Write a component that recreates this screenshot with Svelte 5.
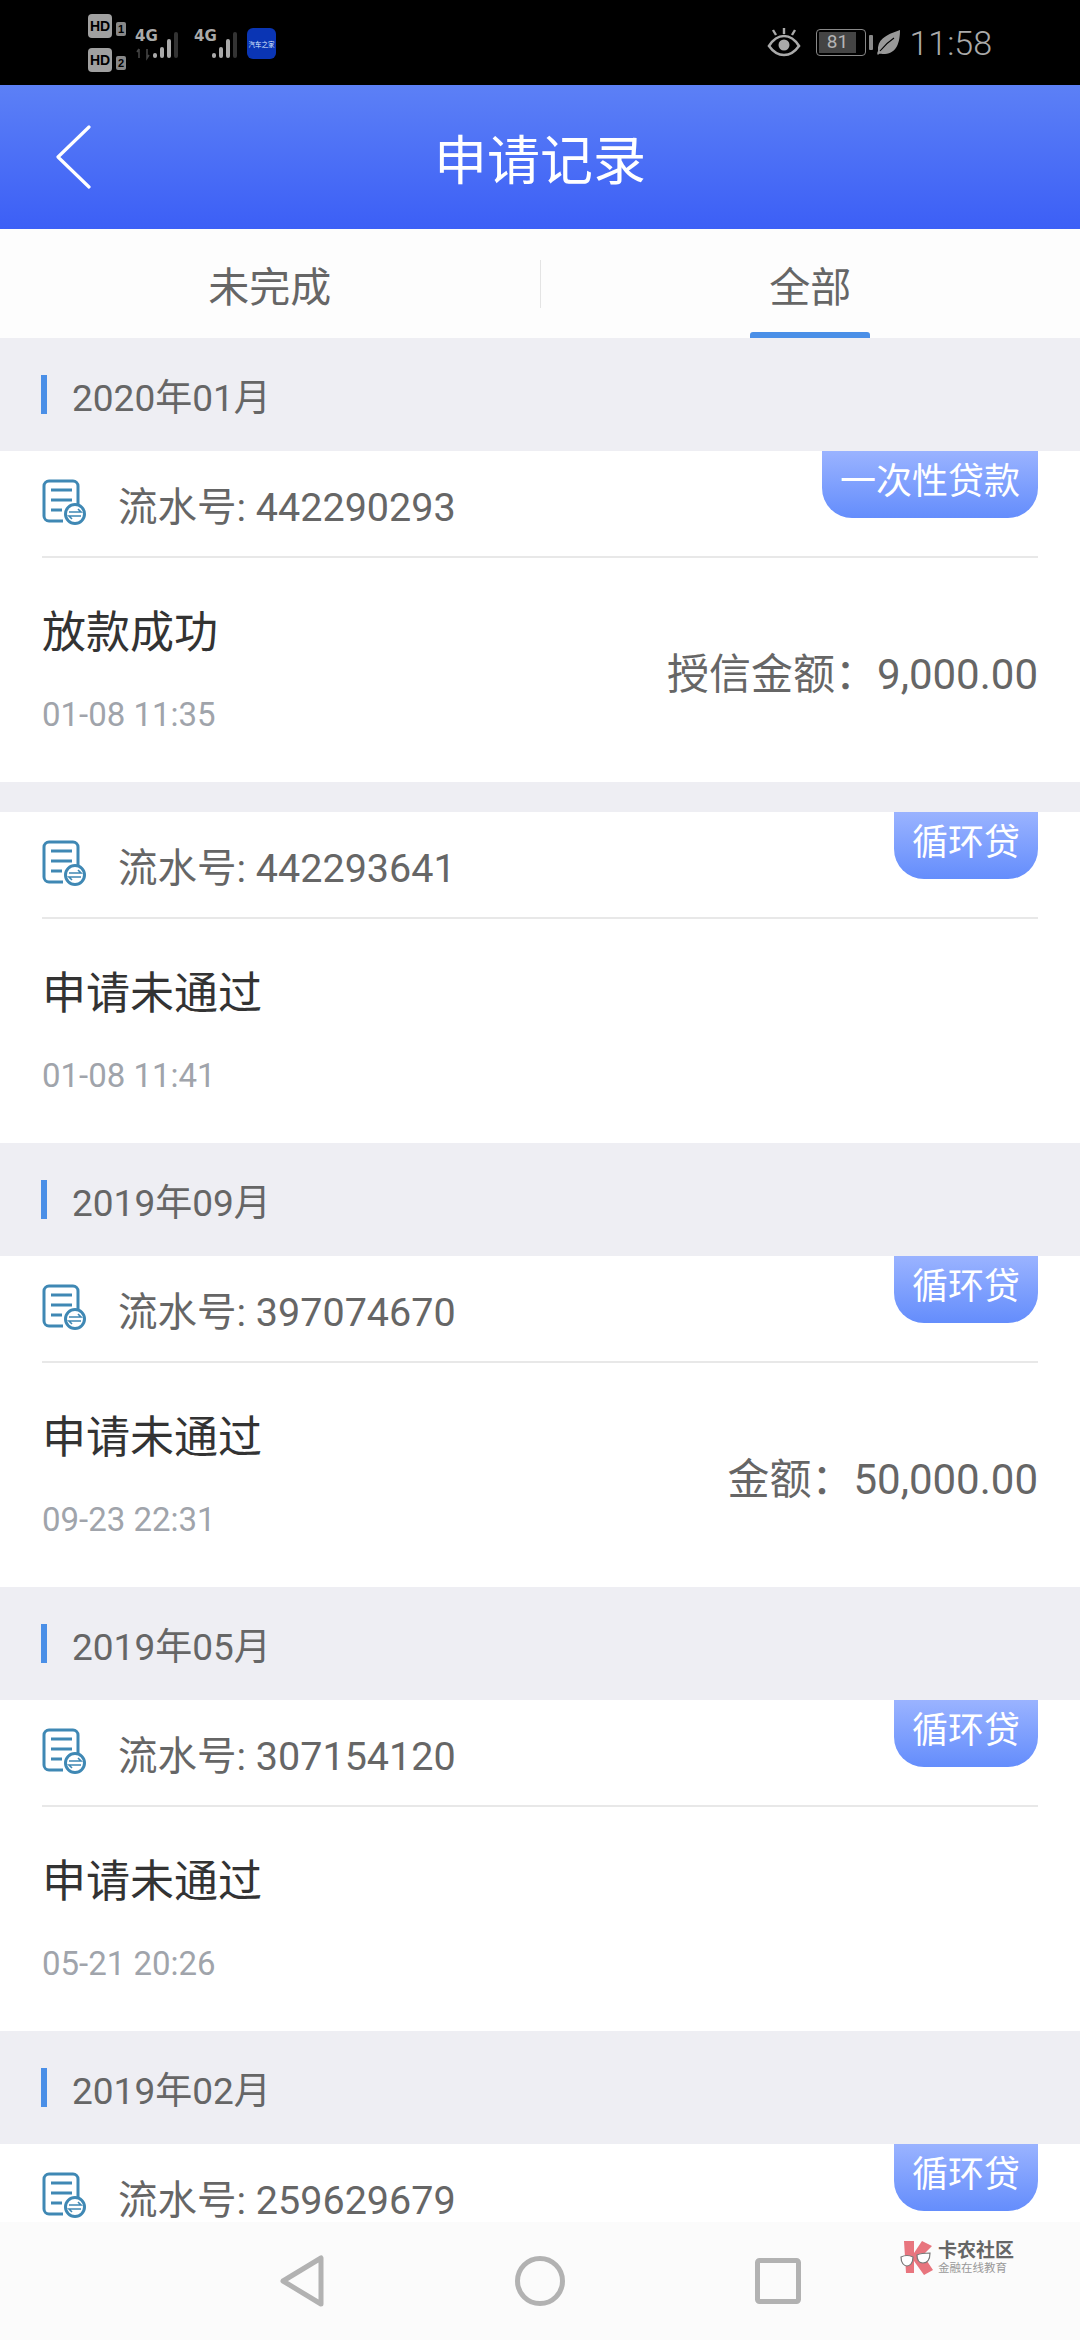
<script>
	const groups = [
		{
			month: "2020年01月",
			items: [
				{ no: "442290293", tag: "一次性贷款", title: "放款成功", time: "01-08 11:35", label: "授信金额", amount: "9,000.00" },
				{ no: "442293641", tag: "循环贷", title: "申请未通过", time: "01-08 11:41" }
			]
		},
		{
			month: "2019年09月",
			items: [{ no: "397074670", tag: "循环贷", title: "申请未通过", time: "09-23 22:31", label: "金额", amount: "50,000.00" }]
		},
		{
			month: "2019年05月",
			items: [{ no: "307154120", tag: "循环贷", title: "申请未通过", time: "05-21 20:26" }]
		},
		{
			month: "2019年02月",
			items: [{ no: "259629679", tag: "循环贷", title: "申请未通过", time: "02-14 10:12" }]
		}
	];
</script>

<div class="phone">
	<div class="statusbar">
		<div class="status-left">
			<div class="hd-col">
				<div class="hd-row"><span class="hd">HD</span><span class="sim">1</span></div>
				<div class="hd-row"><span class="hd">HD</span><span class="sim">2</span></div>
			</div>
			<svg class="signal" width="50" height="36" viewBox="0 0 50 36">
				<text x="0" y="14" class="net">4G</text>
				<path d="M4 22v9M2 25l2-3M12 22v9l2-3" stroke="#444" stroke-width="1.6" fill="none" />
				<rect x="18" y="26" width="4" height="5" rx="2" fill="#aaa" />
				<rect x="25" y="20" width="4" height="11" rx="2" fill="#aaa" />
				<rect x="32" y="12" width="4" height="19" rx="2" fill="#aaa" />
				<rect x="39" y="5" width="4" height="26" rx="2" fill="#333" />
			</svg>
			<svg class="signal second" width="50" height="36" viewBox="0 0 50 36">
				<text x="0" y="14" class="net">4G</text>
				<rect x="18" y="26" width="4" height="5" rx="2" fill="#aaa" />
				<rect x="25" y="20" width="4" height="11" rx="2" fill="#aaa" />
				<rect x="32" y="12" width="4" height="19" rx="2" fill="#aaa" />
				<rect x="39" y="5" width="4" height="26" rx="2" fill="#333" />
			</svg>
			<div class="app-icon"><span>汽车之家</span></div>
		</div>
		<div class="status-right">
			<svg class="eye" width="34" height="30" viewBox="0 0 34 30">
				<path d="M2 19C7 11 12 9 17 9s10 2 15 10C27 26 22 28 17 28S7 26 2 19z" fill="none" stroke="#aaa" stroke-width="2.6" />
				<circle cx="17" cy="18" r="5.5" fill="#aaa" />
				<path d="M17 1v6M6 3l3 5M28 3l-3 5" stroke="#aaa" stroke-width="2.4" fill="none" />
			</svg>
			<div class="battery">
				<div class="battery-body"><span>81</span></div>
				<div class="battery-tip"></div>
			</div>
			<svg class="leaf" width="24" height="26" viewBox="0 0 24 26">
				<path d="M23 0C23 12 20 23 8 24 4 24 2 23 1 25 0 24 0 23 1 21 0 10 8 5 23 0z" fill="#999" />
				<path d="M3 21C7 16 11 12 17 8" stroke="#000" stroke-width="1.2" fill="none" />
			</svg>
			<span class="clock">11:58</span>
		</div>
	</div>

	<header class="topbar">
		<svg class="back" width="40" height="64" viewBox="0 0 40 64">
			<path d="M35 2L4 32l31 30" fill="none" stroke="#fff" stroke-width="3.2" stroke-linecap="round" stroke-linejoin="round" />
		</svg>
		<h1>申请记录</h1>
	</header>

	<nav class="tabs">
		<div class="tab">未完成</div>
		<div class="tab-sep"></div>
		<div class="tab active">全部</div>
	</nav>

	{#each groups as group}
		<section>
			<div class="month"><i></i>{group.month}</div>
			{#each group.items as item, idx}
				<article class="card" class:spaced={idx > 0}>
					<div class="card-head">
						<svg class="doc" width="44" height="46" viewBox="0 0 44 46">
							<path d="M21 42H7a5 5 0 0 1-5-5V7a5 5 0 0 1 5-5h24a5 5 0 0 1 5 5v20" fill="none" stroke="#3f88b4" stroke-width="3" />
							<path d="M9 11h21M9 21h21M9 31h11" stroke="#3f88b4" stroke-width="3" fill="none" />
							<circle cx="33" cy="35" r="9.5" fill="#fff" stroke="#3f88b4" stroke-width="3" />
							<path d="M27 33h12l-3-3M39 37H27l3 3" stroke="#3f88b4" stroke-width="1.6" fill="none" />
						</svg>
						<span class="serial">流水号: {item.no}</span>
						<span class="tag">{item.tag}</span>
					</div>
					<div class="card-body">
						<div>
							<div class="title">{item.title}</div>
							<div class="time">{item.time}</div>
						</div>
						{#if item.amount}
							<div class="amount">{item.label}：<span>{item.amount}</span></div>
						{/if}
					</div>
				</article>
			{/each}
		</section>
	{/each}

	<footer class="navbar">
		<svg width="46" height="52" viewBox="0 0 46 52">
			<path d="M42 3v46L4 26z" fill="none" stroke="#b2b2b2" stroke-width="5" stroke-linejoin="round" />
		</svg>
		<svg width="50" height="50" viewBox="0 0 50 50">
			<circle cx="25" cy="25" r="22.5" fill="none" stroke="#b2b2b2" stroke-width="5" />
		</svg>
		<svg width="46" height="46" viewBox="0 0 46 46">
			<rect x="2.5" y="2.5" width="41" height="41" rx="2" fill="none" stroke="#b2b2b2" stroke-width="5" />
		</svg>
		<div class="watermark">
			<svg width="36" height="36" viewBox="0 0 36 36">
				<path d="M4 1h10v12l8-12 10 5-9 9 10 15-9 5-10-14v12H6z" fill="#e8757e" />
				<path d="M1 17c4-2 8-2 12 0 0 6-3 9-6 9s-6-3-6-9zM17 15c4-2 9-2 13-2 0 7-3 10-7 10s-6-3-6-8z" fill="#fff" stroke="#777" stroke-width="1.2" />
			</svg>
			<div class="wm-text">
				<b>卡农社区</b>
				<small>金融在线教育</small>
			</div>
		</div>
	</footer>
</div>

<style>
	:global(body) {
		margin: 0;
		background: #eeeef3;
	}
	.phone {
		position: relative;
		width: 1080px;
		height: 2340px;
		overflow: hidden;
		background: #eeeef3;
		font-family: Roboto, "Noto Sans CJK SC", sans-serif;
	}
	.statusbar {
		height: 85px;
		background: #000;
		display: flex;
		justify-content: space-between;
		align-items: center;
		padding: 0 88px;
		box-sizing: border-box;
		color: #aaa;
	}
	.status-left,
	.status-right {
		display: flex;
		align-items: center;
	}
	.hd-col {
		display: flex;
		flex-direction: column;
		gap: 10px;
		margin-top: 1px;
	}
	.hd-row {
		display: flex;
		align-items: center;
		gap: 4px;
	}
	.hd {
		width: 24px;
		height: 24px;
		background: #a0a0a0;
		border-radius: 4px;
		color: #000;
		font: bold 14px/24px "Liberation Sans", sans-serif;
		text-align: center;
	}
	.sim {
		width: 10px;
		height: 14px;
		background: #888;
		border-radius: 2px;
		color: #000;
		font: bold 11px/14px "Liberation Sans", sans-serif;
		text-align: center;
		margin-top: 6px;
	}
	.signal {
		margin-left: 9px;
		margin-top: 4px;
	}
	.signal.second {
		margin-left: 9px;
	}
	.net {
		font: bold 15px "DejaVu Sans", sans-serif;
		fill: #aaa;
	}
	.app-icon {
		width: 29px;
		height: 31px;
		margin-left: 3px;
		margin-top: 2px;
		border-radius: 6px;
		background: #0a35b4;
		display: flex;
		align-items: center;
		justify-content: center;
		overflow: hidden;
	}
	.app-icon span {
		font-size: 6.5px;
		color: #dfe8ff;
		white-space: nowrap;
	}
	.status-right {
		margin-right: 0;
	}
	.eye {
		margin-right: 15px;
		margin-top: -2px;
	}
	.battery {
		display: flex;
		align-items: center;
		gap: 3px;
	}
	.battery-body {
		width: 50px;
		height: 27px;
		border: 1.5px solid #888;
		border-radius: 4px;
		box-sizing: border-box;
		padding: 2px;
	}
	.battery-body span {
		display: block;
		height: 100%;
		width: 82%;
		background: #444;
		font-size: 19px;
		line-height: 20px;
		text-align: center;
		color: #b4b4b4;
	}
	.battery-tip {
		width: 4px;
		height: 15px;
		background: #888;
		border-radius: 1px;
	}
	.leaf {
		margin-left: 4px;
		margin-top: 1px;
	}
	.clock {
		margin-left: 8px;
		font-size: 34px;
		font-weight: 300;
		color: #aaa;
	}
	.topbar {
		height: 144px;
		background: linear-gradient(#5c80f6, #3c5ff6);
		display: flex;
		align-items: center;
		justify-content: center;
		position: relative;
	}
	.back {
		position: absolute;
		left: 54px;
		top: 40px;
	}
	h1 {
		margin: 0;
		font-size: 53px;
		font-weight: 400;
		color: #fff;
	}
	.tabs {
		height: 109px;
		background: #fdfdfd;
		display: flex;
		align-items: center;
	}
	.tab {
		flex: 1;
		height: 100%;
		display: flex;
		align-items: center;
		justify-content: center;
		font-size: 41px;
		color: #666;
		position: relative;
	}
	.tab.active::after {
		content: "";
		position: absolute;
		left: 50%;
		bottom: 0;
		width: 120px;
		height: 6px;
		margin-left: -60px;
		border-radius: 3px 3px 0 0;
		background: #4a8fe7;
	}
	.tab-sep {
		width: 1px;
		height: 48px;
		background: #e4e4e4;
	}
	.month {
		height: 113px;
		display: flex;
		align-items: center;
		font-size: 37px;
		color: #666;
		padding-left: 41px;
	}
	.month i {
		width: 6px;
		height: 39px;
		background: #4a8fe7;
		margin-right: 25px;
	}
	.card {
		background: #fff;
		position: relative;
		height: 331px;
	}
	.card.spaced {
		margin-top: 30px;
	}
	.card-head {
		height: 105px;
		margin: 0 42px;
		display: flex;
		align-items: center;
		border-bottom: 2px solid #e8e8e8;
		box-sizing: content-box;
	}
	.doc {
		margin-right: 32px;
		margin-top: -4px;
	}
	.serial {
		font-size: 39.5px;
		color: #666;
	}
	.tag {
		position: absolute;
		top: 0;
		right: 42px;
		height: 67px;
		padding: 0 18px;
		border-radius: 0 0 30px 30px;
		background: linear-gradient(#9ab3ff, #648dfc);
		color: #fff;
		font-size: 36px;
		line-height: 63px;
	}
	.card-body {
		margin: 0 42px;
		height: 224px;
		display: flex;
		align-items: center;
		justify-content: space-between;
	}
	.title {
		font-size: 44px;
		line-height: 60px;
		color: #333;
	}
	.time {
		font-size: 33px;
		line-height: 44px;
		margin-top: 30px;
		color: #a0a4ab;
	}
	.amount {
		font-size: 42px;
		color: #666;
	}
	.navbar {
		position: absolute;
		left: 0;
		right: 0;
		bottom: 0;
		height: 118px;
		background: #fbfbfb;
		display: flex;
		align-items: center;
		justify-content: center;
		gap: 190px;
	}
	.watermark {
		position: absolute;
		left: 900px;
		top: 18px;
		display: flex;
		align-items: center;
		gap: 2px;
	}
	.wm-text {
		display: flex;
		flex-direction: column;
		line-height: 1;
	}
	.wm-text b {
		font-size: 19px;
		color: #666;
		font-weight: 700;
	}
	.wm-text small {
		font-size: 11.5px;
		color: #999;
		margin-top: 3px;
	}
</style>
